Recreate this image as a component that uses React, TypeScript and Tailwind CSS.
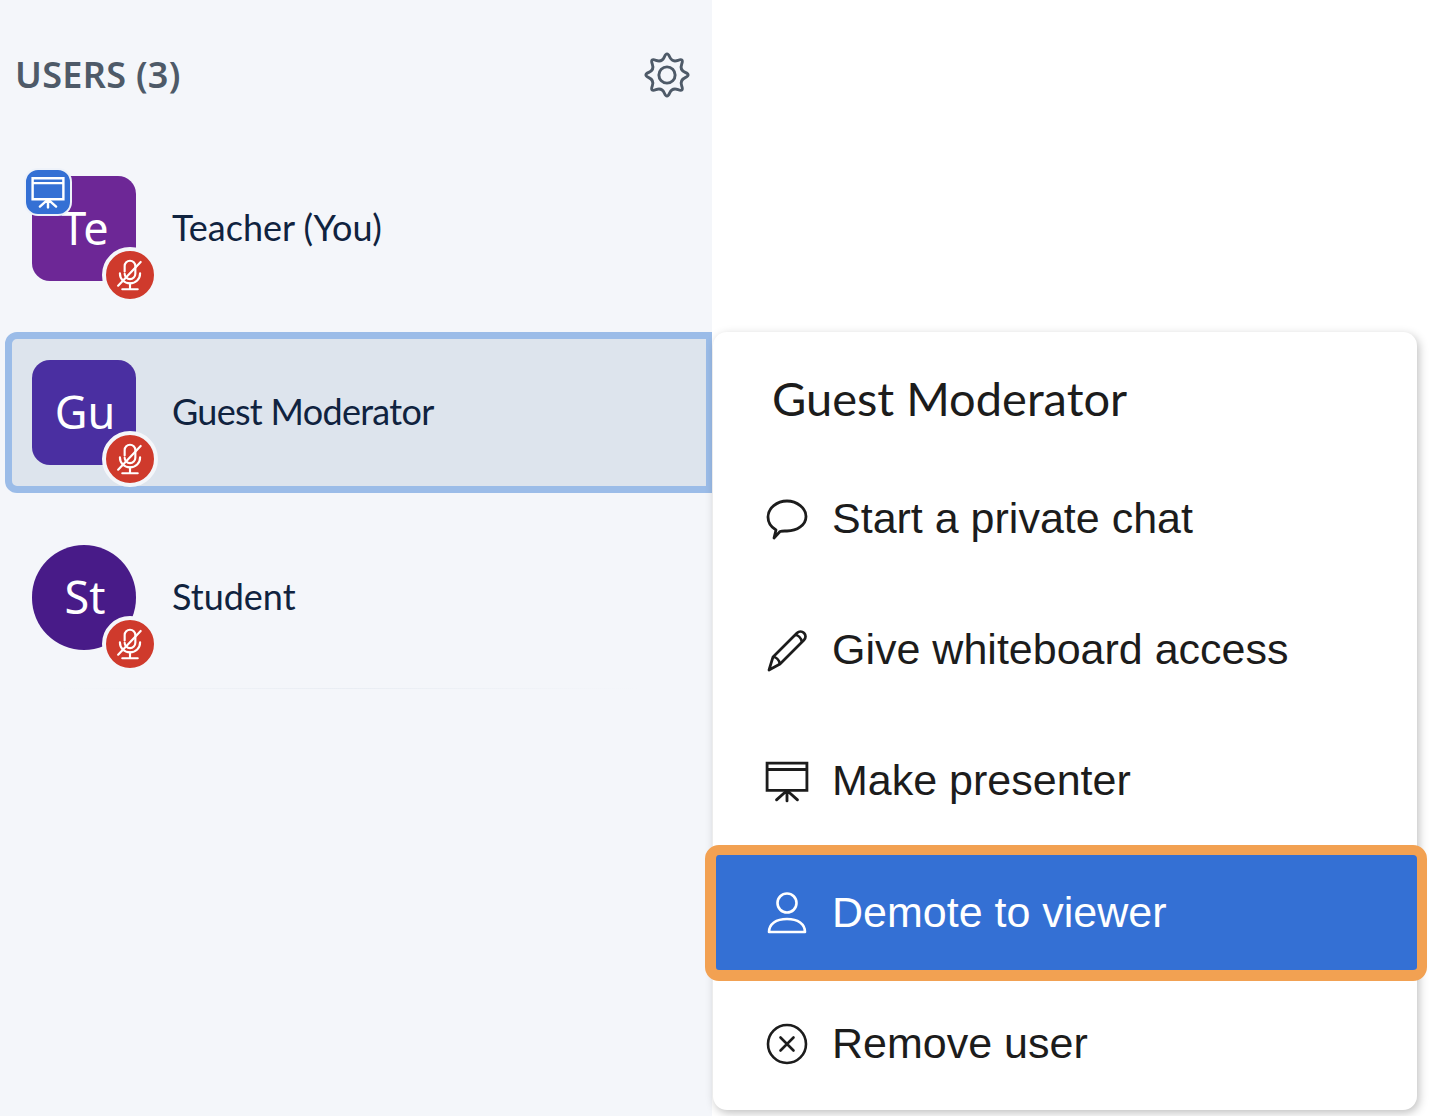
import type { ReactNode } from "react";

function MicOff() {
  return (
    <svg viewBox="0 0 32 32" className="h-[38px] w-[38px]" fill="none" stroke="#fff" strokeWidth="1.800" strokeLinecap="round">
      <path d="M11.500 13V8.500a4.500 4.500 0 0 1 9 0V15a4.500 4.500 0 0 1-9 0" />
      <path d="M7.500 14.500c0 5 3.600 8.500 8.500 8.500s8.500-3.500 8.500-8.500" />
      <path d="M16 23v4.500M9.500 28h13" />
      <path d="M25 5 6 25" />
    </svg>
  );
}

function PresenterIcon({ className, width }: { className: string; width: number }) {
  return (
    <svg viewBox="0 0 42 42" className={className} fill="none" stroke="currentColor" strokeWidth={width} strokeLinecap="round">
      <path d="M2 4h38v26H2zM2 10h38" />
      <path d="M21 30v10M21 30l-10 9M21 30l10 9" />
    </svg>
  );
}

// eight rounded teeth, smoothed with quadratic curves
function gearPath() {
  const pts: [number, number][] = [];
  for (let i = 0; i < 16; i++) {
    const a = (i * Math.PI) / 8 - Math.PI / 2;
    const r = i % 2 === 0 ? 11.500 : 6.500;
    pts.push([12 + r * Math.cos(a), 12 + r * Math.sin(a)]);
  }
  const mid = (p: [number, number], q: [number, number]) => `${((p[0] + q[0]) / 2).toFixed(2)} ${((p[1] + q[1]) / 2).toFixed(2)}`;
  let d = `M${mid(pts[15], pts[0])}`;
  pts.forEach((p, i) => {
    d += `Q${p[0].toFixed(2)} ${p[1].toFixed(2)} ${mid(p, pts[(i + 1) % 16])}`;
  });
  return d + "Z";
}

function Avatar({ initials, color, shape, presenter }: { initials: string; color: string; shape: string; presenter?: boolean }) {
  return (
    <div className={`relative flex h-[105px] w-[104px] shrink-0 items-center justify-center pb-[3px] pl-[2px] ${shape} ${color}`}>
      <span className="text-[45px] leading-none text-white">{initials}</span>
      {presenter && (
        <div className="absolute -left-[8px] -top-[8px] flex h-[48px] w-[48px] items-center justify-center rounded-[14px] border-[2px] border-[#eef2f9] bg-[#3470d4] text-white">
          <PresenterIcon className="h-[34px] w-[34px]" width={3} />
        </div>
      )}
      <div className="absolute -bottom-[22px] -right-[22px] flex h-[56px] w-[56px] items-center justify-center rounded-full border-[4px] border-[#f4f6fa] bg-[#cf3a2c]">
        <MicOff />
      </div>
    </div>
  );
}

function MenuItem({ icon, label, active }: { icon: ReactNode; label: string; active?: boolean }) {
  return (
    <div
      className={
        active
          ? "relative z-10 -mb-[3px] -ml-[8px] -mr-[10px] -mt-px flex h-[136px] items-center gap-[23px] rounded-[14px] border-b-[11px] border-l-[11px] border-r-[10px] border-t-[10px] border-[#f2a152] bg-[#3470d4] pl-[49px] text-white"
          : "flex h-[131px] items-center gap-[23px] pl-[52px] text-[#1c1c1c]"
      }
    >
      <div className="flex h-[44px] w-[44px] shrink-0 items-center justify-center">{icon}</div>
      <span className="text-[43px] leading-none">{label}</span>
    </div>
  );
}

export default function App() {
  return (
    <div className="relative flex h-[1116px] w-[1432px] overflow-hidden bg-white font-['Noto_Sans',sans-serif]">
      <div className="flex w-[712px] shrink-0 flex-col bg-[#f4f6fa]">
        <div className="flex h-[150px] items-center justify-between pl-[15px] pr-[20px]">
          <h2 className="text-[36px] font-semibold tracking-[0.3px] text-[#4e5a68]">USERS (3)</h2>
          <svg viewBox="0 0 24 24" className="h-[50px] w-[50px]" fill="none" stroke="#4e5a68" strokeWidth="1.400" strokeLinejoin="round">
            <path d={gearPath()} />
            <circle cx="12" cy="12" r="3.900" />
          </svg>
        </div>

        <div className="flex h-[182px] items-start gap-[36px] pl-[32px] pt-[26px]">
          <Avatar initials="Te" color="bg-[#6d2796]" shape="rounded-[18px]" presenter />
          <span className="mt-[27px] font-['Lato',sans-serif] text-[36px] leading-[48px] text-[#10233f]">Teacher (You)</span>
        </div>

        <div className="ml-[5px] flex h-[161px] items-start gap-[36px] rounded-l-[12px] border-y-[7px] border-l-[7px] border-r-[6px] border-[#9bbce8] bg-[#dde4ed] pl-[20px] pt-[21px]">
          <Avatar initials="Gu" color="bg-[#4a2fa1]" shape="rounded-[18px]" />
          <span className="mt-[27px] font-['Lato',sans-serif] text-[36px] leading-[48px] tracking-[-0.7px] text-[#10233f]">Guest Moderator</span>
        </div>

        <div className="ml-[32px] mt-[52px] flex items-start gap-[36px]">
          <Avatar initials="St" color="bg-[#481b88]" shape="rounded-full" />
          <span className="mt-[27px] font-['Lato',sans-serif] text-[36px] leading-[48px] text-[#10233f]">Student</span>
        </div>
        <div className="ml-[60px] mt-[38px] h-px w-[580px] bg-linear-to-r from-transparent via-[#e9edf3] to-transparent" />
      </div>

      <div className="absolute left-[713px] top-[332px] w-[704px] rounded-[14px] bg-white pb-px font-['Liberation_Sans',sans-serif] shadow-[2px_3px_10px_rgba(0,0,0,0.25)]">
        <div className="flex h-[121px] items-start pl-[59px] pt-[36px] font-['Lato',sans-serif] text-[47px] leading-[60px] text-[#1c1c1c]">Guest Moderator</div>
        <MenuItem
          label="Start a private chat"
          icon={
            <svg viewBox="0 0 44 44" className="h-[44px] w-[44px]" fill="none" stroke="currentColor" strokeWidth="2.800" strokeLinejoin="round">
              <path d="M9 41l2-8C6 30 3 25 3 20 3 11 12 4 22 4s19 7 19 15.500S32 34 22 34c-3 0-5-.200-7 .500z" />
            </svg>
          }
        />
        <MenuItem
          label="Give whiteboard access"
          icon={
            <svg viewBox="0 0 44 44" className="h-[44px] w-[44px]" fill="none" stroke="currentColor" strokeWidth="2.700" strokeLinejoin="round">
              <path d="M4 42l4-13L32 5c2-2 5-2 7 0s2 5 0 7L15 36z" />
              <path d="M8 29c3 0 6 3 7 7M30 7c3 0 6 3 7 7" />
            </svg>
          }
        />
        <MenuItem label="Make presenter" icon={<PresenterIcon className="h-[44px] w-[44px]" width={2.700} />} />
        <MenuItem
          active
          label="Demote to viewer"
          icon={
            <svg viewBox="0 0 44 44" className="h-[44px] w-[44px]" fill="none" stroke="currentColor" strokeWidth="2.600" strokeLinejoin="round">
              <circle cx="22" cy="12" r="9.500" />
              <path d="M4 41c0-8 7-13 18-13s18 5 18 13z" />
            </svg>
          }
        />
        <MenuItem
          label="Remove user"
          icon={
            <svg viewBox="0 0 44 44" className="h-[44px] w-[44px]" fill="none" stroke="currentColor" strokeWidth="2.600" strokeLinecap="round">
              <circle cx="22" cy="22" r="19" />
              <path d="M15.500 15.500l13 13M28.500 15.500l-13 13" />
            </svg>
          }
        />
      </div>
    </div>
  );
}
